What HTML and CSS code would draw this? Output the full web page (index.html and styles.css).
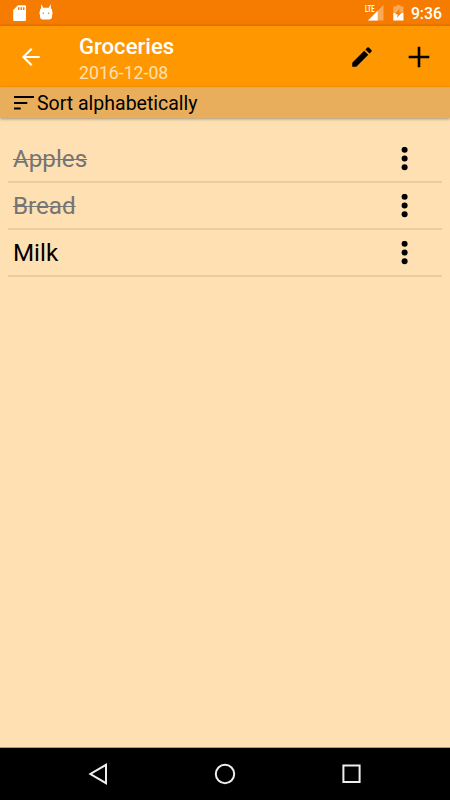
FILE: index.html
```html
<!DOCTYPE html>
<html lang="en">
<head>
<meta charset="utf-8">
<title>Groceries</title>
<link rel="stylesheet" href="styles.css">
</head>
<body>
<div class="status">
  <svg class="sd" width="14" height="18" viewBox="0 0 14 18"><path fill="#fff" fill-rule="evenodd" d="M5 1.200h7Q13 1.200 13 2.200v13.800q0 1-1 1h-10.800Q.2 17 .2 16V6zM5 3.200v2.700h1.500V3.200zm2.500 0v2.700H9V3.200zM10 3.200v2.700h1.500V3.200z"/></svg>
  <svg class="cat" width="14" height="18" viewBox="0 0 14 18"><path fill="#fff" d="M2.300 0l1.900 3.700h5.600L11.700 0l.3 4.500 1 .8v7Q13 15.500 10 15.500H4Q1 15.500 1 12.500v-7l1-.9z"/><path fill="#fff" d="M.3 7.500h13.400v3H.3z" opacity=".7"/><g fill="#f57c00"><circle cx="4.300" cy="9.300" r=".8"/><circle cx="9.700" cy="9.300" r=".8"/></g></svg>
  <span class="grow"></span>
  <span class="lte">LTE</span>
  <svg class="signal" width="16" height="16" viewBox="0 0 16 16"><path fill="#fff" opacity=".35" d="M15.500 0v15.500H0z"/><path fill="#fff" d="M9.700 5.800v9.700H0z"/></svg>
  <svg class="battery" width="11" height="16" viewBox="0 0 11 16"><path fill="#fff" opacity=".35" d="M3.500 0h4v1.600h3v6.600H.3V1.600h3.200z"/><path fill="#fff" d="M.3 8h10.200v7.500H.3z"/><path fill="#f57c00" d="M7 3.600L6 7.400h2.800L3.800 13l1-3.700H2z"/></svg>
  <span class="clock">9:36</span>
</div>
<header class="toolbar">
  <svg class="back" width="20" height="20" viewBox="0 0 20 20"><path fill="none" stroke="#fff" stroke-width="2.100" d="M18.700 10H3M10.700 1.700L2.400 10l8.300 8.300"/></svg>
  <div class="titles"><h1>Groceries</h1><p>2016-12-08</p></div>
  <svg class="edit" width="26" height="26" viewBox="0 0 24 24"><path d="M3 17.250V21h3.750L17.810 9.940l-3.750-3.750zM20.710 7.040a1 1 0 0 0 0-1.410l-2.340-2.340a1 1 0 0 0-1.410 0l-1.830 1.830 3.750 3.750z"/></svg>
  <svg class="add" width="22" height="22" viewBox="0 0 22 22"><path fill="none" stroke="#000" stroke-width="2.600" d="M11 .7v20.600M.7 11h20.600"/></svg>
</header>
<div class="sort">
  <svg width="20" height="14" viewBox="0 0 20 14"><path d="M0 0h20v2H0zM0 5.900h13.300v2H0zM0 11.500h6.700v2H0z"/></svg>
  <span>Sort alphabetically</span>
</div>
<ul class="list">
  <li class="done"><span>Apples</span><svg width="8" height="24" viewBox="0 0 8 24"><circle cx="3.600" cy="2.800" r="3"/><circle cx="3.600" cy="11.500" r="3"/><circle cx="3.600" cy="20.300" r="3"/></svg></li>
  <li class="done"><span>Bread</span><svg width="8" height="24" viewBox="0 0 8 24"><circle cx="3.600" cy="2.800" r="3"/><circle cx="3.600" cy="11.500" r="3"/><circle cx="3.600" cy="20.300" r="3"/></svg></li>
  <li><span>Milk</span><svg width="8" height="24" viewBox="0 0 8 24"><circle cx="3.600" cy="2.800" r="3"/><circle cx="3.600" cy="11.500" r="3"/><circle cx="3.600" cy="20.300" r="3"/></svg></li>
</ul>
<nav class="nav">
  <svg width="24" height="24" viewBox="0 0 24 24"><path d="M19 2.800v18.400L3.400 12z"/></svg>
  <svg width="24" height="24" viewBox="0 0 24 24"><circle cx="12" cy="12" r="9.200"/></svg>
  <svg width="24" height="24" viewBox="0 0 24 24"><path d="M4.400 3.500h16.200v16.600H4.400z"/></svg>
</nav>
</body>
</html>
```
FILE: styles.css
```css
* { box-sizing: border-box; }
body {
  margin: 0;
  width: 450px;
  height: 800px;
  display: flex;
  flex-direction: column;
  overflow: hidden;
  background: #ffe0b2;
  font-family: Roboto, sans-serif;
  color: #000;
}
svg { display: block; flex: none; }
.status {
  height: 26px;
  display: flex;
  align-items: flex-start;
  padding: 4px 8px 0 13px;
  background: linear-gradient(#f57c00 23px, #dc6e00);
  color: #fff;
}
.cat { margin-left: 12px; }
.grow { flex: 1; }
.lte {
  width: 3px;
  font-size: 9px;
  font-weight: 700;
  line-height: 10px;
  white-space: nowrap;
  transform: scaleX(.66);
  transform-origin: 0 0;
}
.signal { margin-top: 1px; }
.battery { margin: 1px 7px 0 9px; }
.clock { font-size: 15.8px; font-weight: 500; line-height: 20px; }
.toolbar {
  height: 61px;
  display: flex;
  align-items: center;
  padding: 0 20px 0 21px;
  background: #ff9800;
}
.titles { flex: 1; align-self: flex-start; margin-left: 38px; padding-top: 8px; }
h1, p { margin: 0; }
h1 { font-size: 22.1px; font-weight: 500; line-height: 24px; color: #fff; }
p { font-size: 17.7px; line-height: 30px; color: #ffe0b2; }
.edit { margin-right: 1px; position: relative; left: 1px; }
.add { margin-left: 33px; }
.sort {
  height: 31px;
  display: flex;
  align-items: center;
  padding-left: 14px;
  gap: 3px;
  background: #e9ae5c;
  border-top: 1px solid #dfaa60;
  font-size: 19.5px;
  box-shadow: 0 1px 3px rgba(0, 0, 0, .35);
}
.list {
  flex: 1;
  list-style: none;
  margin: 0;
  padding: 18px 8px 0;
}
.list li {
  height: 47px;
  display: flex;
  align-items: center;
  justify-content: space-between;
  padding: 0 33.5px 0 5px;
  border-bottom: 2px solid #e9cca2;
  font-size: 24.2px;
}
.done span {
  color: #757575;
  text-decoration: line-through;
  text-decoration-thickness: 1px;
}
.nav {
  height: 53px;
  display: flex;
  align-items: center;
  justify-content: space-between;
  padding: 0 87px;
  background: #000;
  border-top: 1px solid #b39d7d;
}
.nav path, .nav circle { fill: none; stroke: #eee; stroke-width: 2; }
```
